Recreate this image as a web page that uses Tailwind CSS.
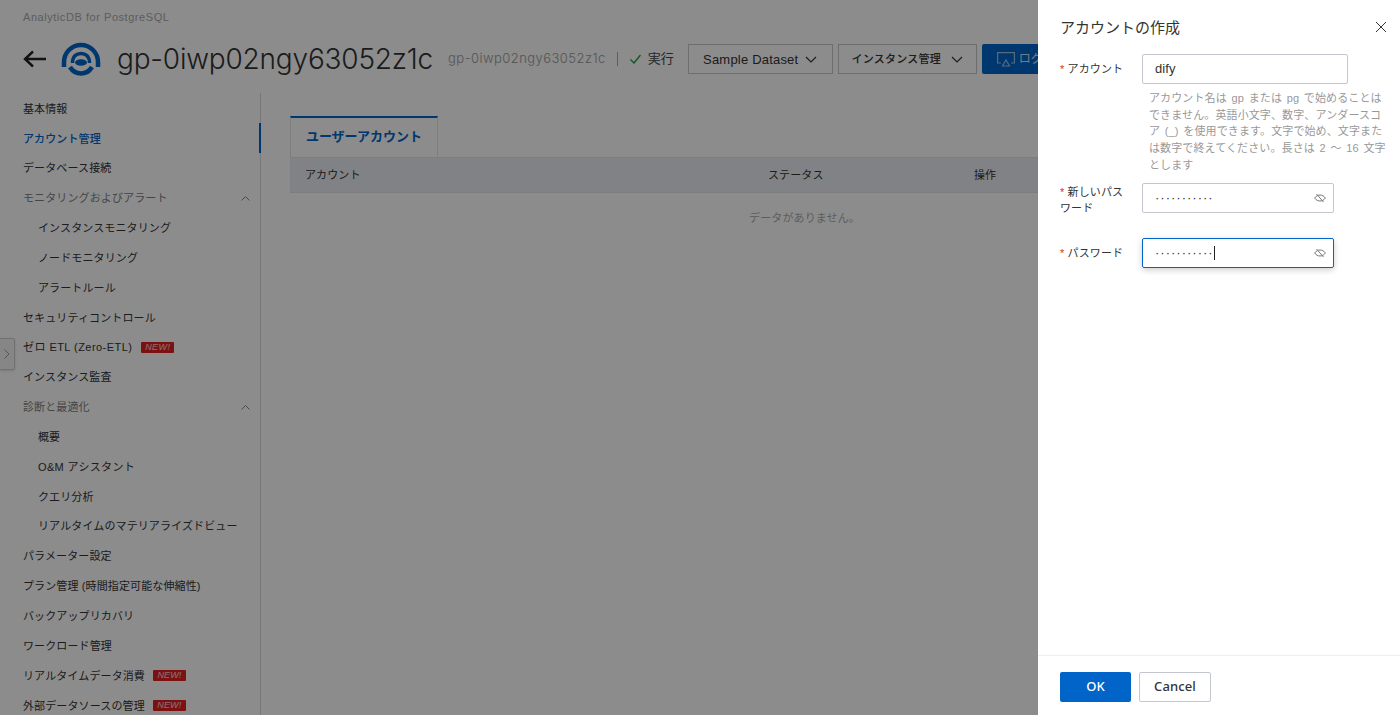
<!doctype html>
<html lang="ja">
<head>
<meta charset="utf-8">
<title>アカウント管理</title>
<script src="https://cdn.jsdelivr.net/npm/@tailwindcss/browser@4"></script>
</head>
<body class="h-[715px] overflow-hidden bg-white text-[#333] text-[11px] tracking-[0.12px] font-['Liberation_Sans','Noto_Sans_CJK_JP',sans-serif]">
<div class="relative h-[715px] w-[1400px] overflow-hidden">

  <!-- page -->
  <div class="flex h-full w-full flex-col">
    <header class="h-[93px] shrink-0 pl-[23px]">
      <div class="pt-[9px] text-[11px] leading-4 tracking-[0.55px] text-[#aaa]">AnalyticDB for PostgreSQL</div>
      <div class="mt-[16px] flex h-[36px] items-center">
        <svg class="h-[18px] w-[23px]" viewBox="0 0 23 18" fill="none" stroke="#222" stroke-width="2.4"><path d="M23 9H2M10 1.5 2 9l8 7.5"/></svg>
        <svg class="ml-[15px] h-[34px] w-[40px]" viewBox="0 0 40 34" fill="none" stroke="#0064c8">
          <path d="M3 25V20A17 17 0 0 1 37 20V25" stroke-width="4.500"/>
          <path d="M9 25C12 30 16 31.500 20 31.500S28 30 31 25" stroke-width="4.500"/>
          <path d="M11.500 21C11.500 14 15.500 11.500 20 11.500S28.500 14 28.500 21" stroke-width="3.500"/>
          <ellipse cx="20" cy="20.500" rx="6" ry="3.300" fill="#0064c8" stroke="none"/>
        </svg>
        <h1 class="ml-[16px] whitespace-nowrap font-['Inter',sans-serif] text-[28px] font-light leading-9 tracking-[-0.2px] text-[#333]">gp-0iwp02ngy63052z1c</h1>
        <span class="ml-[15px] font-['Inter',sans-serif] text-[13px] font-light tracking-[0.45px] text-[#999]">gp-0iwp02ngy63052z1c</span>
        <span class="ml-[11px] h-[14px] w-px bg-[#aaa]"></span>
        <svg class="ml-[12px] h-[10px] w-[11px]" viewBox="0 0 11 10" fill="none" stroke="#1f9d3a" stroke-width="1.400"><path d="M.5 5.500 4 9 10.500 1"/></svg>
        <span class="ml-[7px] text-[13px] tracking-normal text-[#444]">実行</span>
        <button class="ml-[14px] flex h-[30px] w-[145px] items-center justify-center gap-[7px] border border-[#c8c8c8] pt-[1px] text-[13px] tracking-[0.2px] text-[#333]">Sample Dataset
          <svg class="h-[7px] w-[12px]" viewBox="0 0 12 7" fill="none" stroke="#333" stroke-width="1.200"><path d="m1 1 5 5 5-5"/></svg>
        </button>
        <button class="ml-[5px] flex h-[30px] w-[139px] items-center justify-center gap-[10px] border border-[#c8c8c8] pt-[1px] text-[11px] font-medium tracking-[0.25px] text-[#333]">インスタンス管理
          <svg class="h-[7px] w-[12px]" viewBox="0 0 12 7" fill="none" stroke="#333" stroke-width="1.200"><path d="m1 1 5 5 5-5"/></svg>
        </button>
        <button class="ml-[5px] flex h-[30px] w-[120px] items-center gap-[4px] rounded-[2px] bg-[#0064c8] pl-[15px] text-xs text-white/80">
          <svg class="h-[15px] w-[18px] shrink-0" viewBox="0 0 18 15" fill="none" stroke="#fff" stroke-opacity=".6" stroke-width="1.200"><path d="M4 11H.6V.6h16.800V11H14"/><path d="m9 8 3.500 6h-7Z"/></svg>
          ログイン
        </button>
      </div>
    </header>

    <div class="flex min-h-0 flex-1">
      <nav class="h-full w-[261px] shrink-0 border-r border-[#d9d9d9] text-[#333] [&>a]:pt-[2px]">
        <a class="flex h-[29.850px] items-center pl-[23px]">基本情報</a>
        <a class="-mr-[1px] flex h-[29.850px] items-center border-r-2 border-[#0064c8] pl-[23px] font-medium text-[#0064c8]">アカウント管理</a>
        <a class="flex h-[29.850px] items-center pl-[23px]">データベース接続</a>
        <a class="flex h-[29.850px] items-center justify-between pl-[23px] pr-[10px] text-[#808080]">モニタリングおよびアラート
          <svg class="h-[5px] w-[9px]" viewBox="0 0 9 5" fill="none" stroke="#888"><path d="m.5 4.500 4-4 4 4"/></svg>
        </a>
        <a class="flex h-[29.850px] items-center pl-[38px]">インスタンスモニタリング</a>
        <a class="flex h-[29.850px] items-center pl-[38px]">ノードモニタリング</a>
        <a class="flex h-[29.850px] items-center pl-[38px]">アラートルール</a>
        <a class="flex h-[29.850px] items-center pl-[23px]">セキュリティコントロール</a>
        <a class="flex h-[29.850px] items-center pl-[23px] tracking-[0.45px]">ゼロ ETL (Zero-ETL)
          <span class="ml-[9px] flex h-[11px] w-[33px] items-center justify-center rounded-[1px] bg-[#e02020] text-[9px] italic leading-none text-white/80">NEW!</span>
        </a>
        <a class="flex h-[29.850px] items-center pl-[23px]">インスタンス監査</a>
        <a class="flex h-[29.850px] items-center justify-between pl-[23px] pr-[10px] text-[#808080]">診断と最適化
          <svg class="h-[5px] w-[9px]" viewBox="0 0 9 5" fill="none" stroke="#888"><path d="m.5 4.500 4-4 4 4"/></svg>
        </a>
        <a class="flex h-[29.850px] items-center pl-[38px]">概要</a>
        <a class="flex h-[29.850px] items-center pl-[38px] tracking-[0.35px]">O&amp;M アシスタント</a>
        <a class="flex h-[29.850px] items-center pl-[38px]">クエリ分析</a>
        <a class="flex h-[29.850px] items-center pl-[38px]">リアルタイムのマテリアライズドビュー</a>
        <a class="flex h-[29.850px] items-center pl-[23px]">パラメーター設定</a>
        <a class="flex h-[29.850px] items-center pl-[23px]">プラン管理 (時間指定可能な伸縮性)</a>
        <a class="flex h-[29.850px] items-center pl-[23px]">バックアップリカバリ</a>
        <a class="flex h-[29.850px] items-center pl-[23px]">ワークロード管理</a>
        <a class="flex h-[29.850px] items-center pl-[23px]">リアルタイムデータ消費
          <span class="ml-[8px] flex h-[11px] w-[33px] items-center justify-center rounded-[1px] bg-[#e02020] text-[9px] italic leading-none text-white/80">NEW!</span>
        </a>
        <a class="flex h-[29.850px] items-center pl-[23px]">外部データソースの管理
          <span class="ml-[8px] flex h-[11px] w-[33px] items-center justify-center rounded-[1px] bg-[#e02020] text-[9px] italic leading-none text-white/80">NEW!</span>
        </a>
      </nav>

      <main class="min-w-0 flex-1 pl-[29px] pt-[23px]">
        <div class="flex h-[41px] w-[148px] items-center justify-center border-x border-t-2 border-x-[#e3e3e3] border-t-[#0064c8] pb-[2px] text-[13px] font-bold tracking-normal text-[#0064c8]">ユーザーアカウント</div>
        <div class="flex h-[36px] items-center border-y border-[#e3e3e3] bg-[#ebedf2] pl-[15px]">
          <span class="w-[463px]">アカウント</span>
          <span class="w-[206px]">ステータス</span>
          <span>操作</span>
        </div>
        <div class="w-[1029px] pt-[17px] text-center text-[#aaa]">データがありません。</div>
      </main>
    </div>
  </div>

  <!-- sidebar collapse handle -->
  <div class="absolute left-0 top-[338px] flex h-[32px] w-[15px] items-center justify-center rounded-r-[2px] border border-l-0 border-[#ccc] bg-[#f5f5f5] shadow-sm">
    <svg class="h-[10px] w-[6px]" viewBox="0 0 6 10" fill="none" stroke="#999"><path d="m.5.5 4.500 4.500-4.500 4.500"/></svg>
  </div>

  <!-- mask -->
  <div class="absolute inset-0 bg-black/45"></div>

  <!-- drawer -->
  <aside class="absolute inset-y-0 right-0 flex w-[362px] flex-col bg-white">
    <div class="flex h-[54px] shrink-0 items-center justify-between pl-[22px] pr-[13px]">
      <h2 class="pt-[1px] text-[15px] leading-none tracking-normal text-[#333]">アカウントの作成</h2>
      <svg class="h-[12px] w-[12px]" viewBox="0 0 12 12" fill="none" stroke="#333" stroke-width="1"><path d="m1 1 10 10M11 1 1 11"/></svg>
    </div>

    <form class="min-h-0 flex-1 pl-[22px]">
      <div class="flex">
        <label class="w-[82px] pt-[7px] leading-[17px]"><span class="text-[#d93026]">* </span>アカウント</label>
        <div>
          <div class="flex h-[30px] w-[206px] items-center rounded-[2px] border border-[#c4c6cf] pl-[12px] text-[13px] text-[#333]">dify</div>
          <p class="mt-[6px] whitespace-nowrap pl-[7px] leading-[16.700px] text-[#999] [word-spacing:1.500px]">アカウント名は gp または pg で始めることは<br>できません。英語小文字、数字、アンダースコ<br>ア (_) を使用できます。文字で始め、文字また<br>は数字で終えてください。長さは 2 ～ 16 文字<br>とします</p>
        </div>
      </div>
      <div class="mt-[9.500px] flex">
        <label class="w-[82px] pt-[1px] leading-[16px]"><span class="text-[#d93026]">* </span>新しいパス<br>ワード</label>
        <div class="flex h-[30px] w-[192px] items-center justify-between rounded-[2px] border border-[#c4c6cf] pl-[12px] pr-[7px]">
          <span class="text-[13px] tracking-[1px] text-[#333]">···········</span>
          <svg class="h-[10px] w-[12px]" viewBox="0 0 12 10" fill="none" stroke="#777"><path d="M.6 5C2 3 4 2 6 2s4 1 5.400 3C10 7 8 8 6 8S2 7 .6 5Z"/><path d="m2.500 1 7 8"/></svg>
        </div>
      </div>
      <div class="mt-[22px] flex">
        <label class="w-[82px] pt-[7px] leading-[17px]"><span class="text-[#d93026]">* </span>パスワード</label>
        <div class="flex h-[30px] w-[192px] items-center justify-between rounded-[2px] border border-[#0064c8] pl-[12px] pr-[7px] shadow-[0_2px_6px_rgba(0,0,0,0.2)]">
          <span class="flex items-center text-[13px] tracking-[1px] text-[#333]">···········<span class="h-[14px] w-px bg-[#222]"></span></span>
          <svg class="h-[10px] w-[12px]" viewBox="0 0 12 10" fill="none" stroke="#777"><path d="M.6 5C2 3 4 2 6 2s4 1 5.400 3C10 7 8 8 6 8S2 7 .6 5Z"/><path d="m2.500 1 7 8"/></svg>
        </div>
      </div>
    </form>

    <footer class="flex h-[60px] shrink-0 items-start gap-[8px] border-t border-[#eee] pl-[22px] pt-[16px]">
      <button class="h-[30px] w-[71px] rounded-[2px] bg-[#0064c8] font-['Noto_Sans'] text-[13px] font-medium text-white">OK</button>
      <button class="h-[30px] w-[72px] rounded-[2px] border border-[#c4c6cf] font-['Noto_Sans'] text-[13px] font-medium text-[#333]">Cancel</button>
    </footer>
  </aside>
</div>
</body>
</html>
